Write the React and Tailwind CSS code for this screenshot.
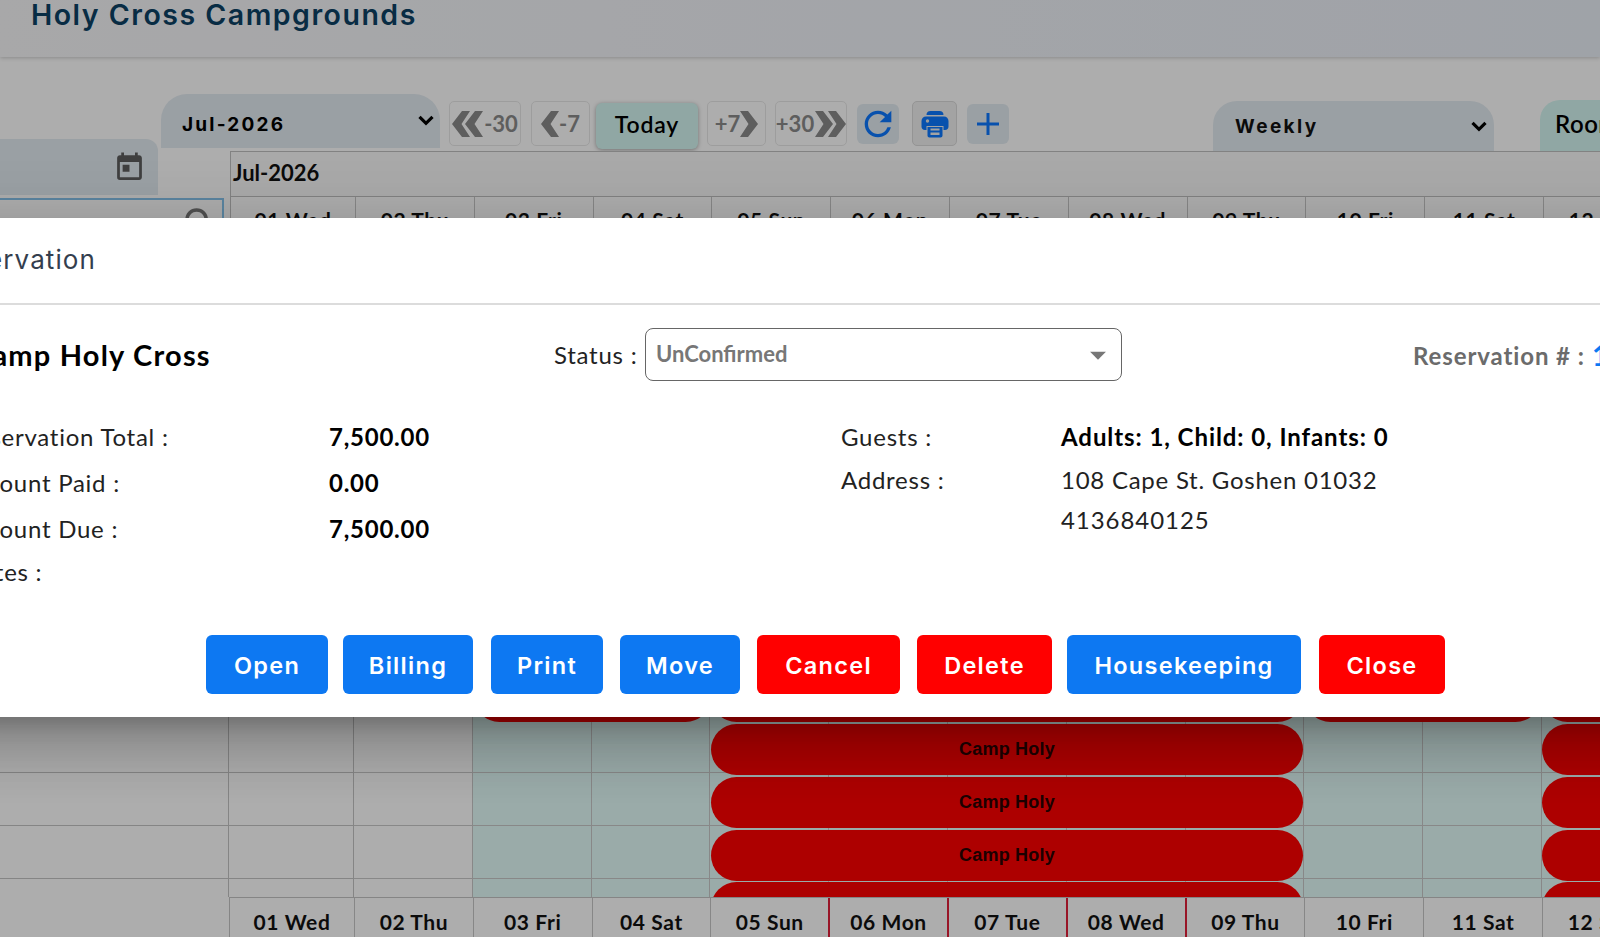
import React from "react";
import { MdToday, MdRefresh, MdSearch, MdArrowDropDown } from "react-icons/md";

const days = [
  "02 Thu",
  "03 Fri",
  "04 Sat",
  "05 Sun",
  "06 Mon",
  "07 Tue",
  "08 Wed",
  "09 Thu",
  "10 Fri",
  "11 Sat",
  "12 Sun",
];

// Days covered by a booking show a red separator in the footer
const bookedEdges = ["05 Sun", "06 Mon", "07 Tue", "08 Wed"];

const actions = [
  { label: "Open", style: "w-[122px] mr-[15px] bg-[#0d78f2]" },
  { label: "Billing", style: "w-[130px] mr-[18px] bg-[#0d78f2]" },
  { label: "Print", style: "w-[112px] mr-[17px] bg-[#0d78f2]" },
  { label: "Move", style: "w-[120px] mr-[17px] bg-[#0d78f2]" },
  { label: "Cancel", style: "w-[143px] mr-[17px] bg-[#ff0000]" },
  { label: "Delete", style: "w-[135px] mr-[15px] bg-[#ff0000]" },
  { label: "Housekeeping", style: "w-[234px] mr-[18px] bg-[#0d78f2]" },
  { label: "Close", style: "w-[126px] bg-[#ff0000]" },
];

function Chevron({ className = "" }) {
  return (
    <svg viewBox="0 0 16 11" className={className} fill="none" stroke="#000" strokeWidth="3.2">
      <path d="M1.5 1.8L8 8.3L14.5 1.8" />
    </svg>
  );
}

function Arrow({ double, flip }) {
  return (
    <svg
      viewBox={double ? "0 0 32 30" : "0 0 18 30"}
      className={`${double ? "w-8" : "w-[18px]"} h-[30px] shrink-0 ${flip ? "-scale-x-100" : ""}`}
      fill="#8b8b8b"
    >
      <path d="M0 15L10 2H18L9.5 15L18 28H10Z" />
      {double && <path d="M13 15L23 2H31L22.5 15L31 28H23Z" />}
    </svg>
  );
}

function StepButton({ className, children }) {
  return (
    <button
      className={`flex h-[45px] shrink-0 items-center justify-center rounded-[5px] border border-[#e8e8e8] font-[Lato] text-[22px] font-bold text-[#8b8b8b] ${className}`}
    >
      {children}
    </button>
  );
}

function PrintIcon() {
  return (
    <svg viewBox="0 0 28 28" className="h-7 w-7" fill="#0d78ff">
      <path d="M5.500 5C5.500 2.500 7 1 9.500 1h9C21 1 22.500 2.500 22.500 5z" />
      <path d="M5 6.500h18c2.500 0 4.500 2 4.500 4.500v5.500c0 2-1.300 3.500-3.500 3.500h-1.500v-4h-17v4H4C1.800 20 .5 18.500 .5 16.500V11c0-2.500 2-4.500 4.500-4.500z" />
      <path fillRule="evenodd" d="M6.500 17h15v8.500c0 1.200-.8 2-2 2h-11c-1.200 0-2-.8-2-2zM9.500 18.500v2h9v-2zM9.500 22.500v2.500h9v-2.500z" />
      <circle cx="6.500" cy="11" r="1.700" fill="#e5e5e5" />
    </svg>
  );
}

function Toolbar() {
  return (
    <div className="flex h-[62px] items-start pl-[161px] pt-[5px]">
      <div className="flex h-[54px] w-[279px] shrink-0 items-center justify-between rounded-t-[26px] bg-[#e4ecf2] pl-[21px] pr-[6px]">
        <span className="mt-[9px] font-[Inter] text-[19px] font-bold tracking-[2.2px] text-black">Jul-2026</span>
        <Chevron className="mb-px h-[11px] w-4" />
      </div>
      <div className="flex shrink-0 pl-[9px] pt-[7px]">
        <StepButton className="mr-[10px] w-[72px]">
          <Arrow double />
          -30
        </StepButton>
        <StepButton className="mr-[6px] w-[59px]">
          <Arrow />
          -7
        </StepButton>
        <button className="mr-[9px] mt-0.5 h-[46px] w-[102px] rounded-md bg-[#d4f7f2] pb-1 font-[Lato] text-[23px] font-semibold tracking-[0.8px] text-black shadow-[0_1px_4px_rgba(0,0,0,0.35)]">
          Today
        </button>
        <StepButton className="mr-[9px] w-[59px]">
          +7
          <Arrow flip />
        </StepButton>
        <StepButton className="mr-[10px] w-[72px]">
          +30
          <Arrow double flip />
        </StepButton>
        <button className="mr-[13px] mt-[3px] flex h-10 w-[42px] items-center justify-center rounded-md bg-[#e4ecf2]">
          <MdRefresh className="h-10 w-10 text-[#0d78ff]" />
        </button>
        <button className="mr-[10px] flex h-[45px] w-[45px] items-center justify-center rounded-[5px] border border-[#dadada] bg-[#f0f0f0]">
          <PrintIcon />
        </button>
        <button className="mt-[3px] flex h-10 w-[42px] items-center justify-center rounded-md bg-[#e4ecf2]">
          <svg viewBox="0 0 24 24" className="h-6 w-6" stroke="#0d78ff" strokeWidth="3">
            <path d="M12 1V23M1 12H23" />
          </svg>
        </button>
      </div>
      <div className="ml-[204px] mt-[7px] flex h-[50px] w-[281px] shrink-0 items-center justify-between rounded-t-[24px] bg-[#e4ecf2] pl-[22px] pr-[7px]">
        <span className="mt-0.5 font-[Inter] text-[19px] font-bold tracking-[2.400px] text-[#111]">Weekly</span>
        <Chevron className="h-[11px] w-4" />
      </div>
      <div className="ml-[46px] mt-[6px] flex h-[51px] w-[120px] shrink-0 items-center rounded-tl-[20px] bg-[#d4f7f2] pl-[15px] pb-1 font-[Lato] text-[24px] font-semibold tracking-[0.5px] text-black">
        Rooms
      </div>
    </div>
  );
}

function DayRow({ footer }) {
  const base = "flex shrink-0 items-center justify-center border-r font-[Lato] text-[21px] font-bold tracking-[0.6px]";
  return (
    <div className={`flex ${footer ? "h-[42px]" : "h-full"}`}>
      <div className={`${base} w-[125px] border-[#c8c8c8] ${footer ? "pt-1.5" : ""}`}>01 Wed</div>
      {days.map((day) => (
        <div
          key={day}
          className={`${base} w-[118.8px] ${footer ? "pt-1.5" : ""} ${footer && bookedEdges.includes(day) ? "border-r-2 border-[#e0203a]" : "border-[#c8c8c8]"}`}
        >
          {day}
        </div>
      ))}
    </div>
  );
}

function BookingBar({ className, children }) {
  return (
    <div
      className={`absolute flex items-center justify-center rounded-full bg-[#ff0000] font-[Liberation_Sans] text-[18px] font-bold tracking-[0.2px] text-[#2a0000] ${className}`}
    >
      {children}
    </div>
  );
}

function Planner() {
  return (
    <div className="relative h-[180px] overflow-hidden">
      {/* Room rows */}
      <div className="flex h-full flex-col">
        {["h-[56px]", "h-[53px]", "h-[53px]", "h-[18px]"].map((height, i) => (
          <div key={i} className={`flex shrink-0 ${height}`}>
            <div className={`w-[229px] shrink-0 border-r border-[#c4c4c4] ${i < 3 ? "border-b" : ""}`} />
            <div className={`w-[125px] shrink-0 border-r border-[#c4c4c4] ${i < 3 ? "border-b" : ""}`} />
            {days.map((day) => (
              <div
                key={day}
                className={`w-[118.8px] shrink-0 border-r border-[#c9c9c9] ${i < 3 ? "border-b" : ""} ${day === "02 Thu" ? "" : "bg-[#e4fdf9]"}`}
              />
            ))}
          </div>
        ))}
      </div>
      {/* Bookings */}
      <BookingBar className="left-[474px] top-[-46px] h-[51px] w-[237px]" />
      <BookingBar className="left-[711px] top-[-46px] h-[51px] w-[592px]" />
      <BookingBar className="left-[1305px] top-[-46px] h-[51px] w-[236px]" />
      <BookingBar className="left-[1542px] top-[-46px] h-[51px] w-[592px]" />
      {["top-[7px]", "top-[60px]", "top-[113px]", "top-[165px]"].map((top, i) => (
        <React.Fragment key={top}>
          <BookingBar className={`left-[711px] h-[51px] w-[592px] ${top}`}>{i < 3 && "Camp Holy"}</BookingBar>
          <BookingBar className={`left-[1542px] h-[51px] w-[592px] ${top}`} />
        </React.Fragment>
      ))}
    </div>
  );
}

function Field({ label, value, className = "" }) {
  return (
    <div className={`flex items-center ${className}`}>
      <span className="w-[367px]">{label}</span>
      <span className="font-bold text-black">{value}</span>
    </div>
  );
}

function ReservationModal() {
  return (
    <div className="absolute -left-[60px] top-[218px] h-[499px] w-[1760px] bg-white font-[Lato] text-[24px] tracking-[0.75px] text-[#222] shadow-[0_15px_20px_-9px_rgba(0,0,0,0.2),0_32px_51px_4px_rgba(0,0,0,0.14),0_12px_61px_11px_rgba(0,0,0,0.12)]">
      <div className="flex h-[87px] items-center border-b-2 border-[#dcdcdc]">
        <h2 className="flex w-[156px] justify-end pb-0.5 font-[Inter] text-[26px] tracking-[1.1px] text-[#343e4e]">Reservation</h2>
      </div>
      <div className="flex h-[99px] items-center pl-[32px]">
        <h3 className="w-[582px] text-[29px] font-bold tracking-[1.2px] text-black">Camp Holy Cross</h3>
        <span className="w-[91px]">Status :</span>
        <div className="flex h-[53px] w-[477px] items-center justify-between rounded-lg border-[1.5px] border-[#666] pb-0.5 pl-[10px] pr-[4px] text-[22px] font-bold tracking-normal text-[#777]">
          UnConfirmed
          <MdArrowDropDown className="mt-0.5 h-[38px] w-[38px]" />
        </div>
        <span className="ml-[291px] mt-[3px] w-[179px] font-bold tracking-[0.9px] text-[#6b6b6b]">Reservation # :</span>
        <span className="text-[29px] font-bold text-[#0d78f2]">1042</span>
      </div>
      <div className="flex h-[216px] pl-[22px] pt-[10px]">
        <div className="w-[879px]">
          <Field label="Reservation Total :" value="7,500.00" className="h-[46px]" />
          <Field label="Amount Paid :" value="0.00" className="h-[46px]" />
          <Field label="Amount Due :" value="7,500.00" className="h-[46px]" />
          <Field label="Notes :" className="h-[40px]" />
        </div>
        <div className="w-[220px]">
          <div className="flex h-[45px] items-center">Guests :</div>
          <div className="flex h-[42px] items-center">Address :</div>
        </div>
        <div>
          <div className="flex h-[45px] items-center font-bold tracking-[0.93px] text-black">
            Adults: 1, Child: 0, Infants: 0
          </div>
          <div className="flex h-[42px] items-center">108 Cape St. Goshen 01032</div>
          <div className="flex h-[37px] items-center tracking-[0.95px]">4136840125</div>
        </div>
      </div>
      <div className="flex pl-[266px] pt-[15px]">
        {actions.map((action) => (
          <button
            key={action.label}
            className={`h-[59px] shrink-0 rounded-md pt-0.5 font-[Inter] text-[23.5px] font-semibold tracking-[1.3px] text-white ${action.style}`}
          >
            {action.label}
          </button>
        ))}
      </div>
    </div>
  );
}

const App = () => {
  return (
    <div className="relative h-[937px] w-[1600px] overflow-hidden bg-white text-[#111]">
      <header className="flex h-[57px] items-start bg-linear-to-r from-[#f8f8fa] to-[#ebf0f8] pl-[31px] shadow-[0_1px_4px_rgba(0,0,0,0.2)]">
        <h1 className="-mt-[1px] font-[Inter] text-[28.5px] font-semibold leading-[32px] tracking-[1.5px] text-[#0c4265]">
          Holy Cross Campgrounds
        </h1>
      </header>
      <div className="h-8" />
      <Toolbar />
      <div className="-mt-3 flex h-[578px]">
        <div className="w-[230px] shrink-0">
          <div className="flex h-[56px] w-[158px] items-center justify-end rounded-tr-xl bg-[#e4ecf2] pr-3">
            <MdToday className="h-[33px] w-[33px] text-[#5e5e5e]" />
          </div>
          <div className="mt-[3px] flex h-14 w-[224px] items-start justify-end border-2 border-l-0 border-[#86c4ee] pt-[3px]">
            <MdSearch className="h-[42px] w-[42px] text-[#777]" />
          </div>
        </div>
        <div className="mt-3 w-[1370px] overflow-hidden border-l border-t border-[#c0c0c0]">
          <div className="flex h-[45px] items-center border-b border-[#c0c0c0] bg-[#fafafa] pb-1 pl-0.5 font-[Lato] text-[22px] font-bold">
            Jul-2026
          </div>
          <div className="h-[45px]">
            <DayRow />
          </div>
        </div>
      </div>
      <Planner />
      <div className="flex h-10">
        <div className="w-[230px] shrink-0 border-r border-[#c4c4c4]" />
        <div className="w-[1370px] overflow-hidden border-t border-[#c4c4c4]">
          <DayRow footer />
        </div>
      </div>

      {/* Backdrop */}
      <div className="absolute inset-0 bg-black/32" />
      <ReservationModal />
    </div>
  );
};

export default App;
